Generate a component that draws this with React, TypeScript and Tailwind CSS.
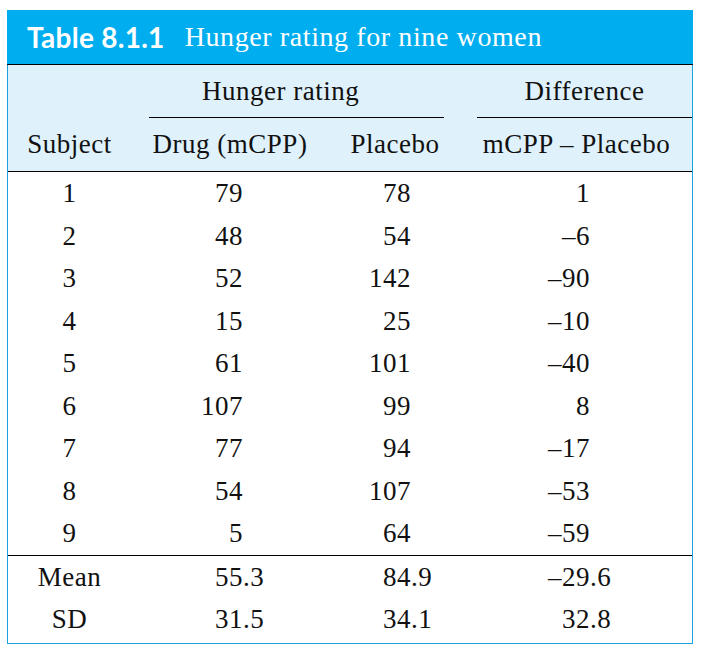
const rows: [string, string, string, string][] = [
  ["1", "79", "78", "1"],
  ["2", "48", "54", "–6"],
  ["3", "52", "142", "–90"],
  ["4", "15", "25", "–10"],
  ["5", "61", "101", "–40"],
  ["6", "107", "99", "8"],
  ["7", "77", "94", "–17"],
  ["8", "54", "107", "–53"],
  ["9", "5", "64", "–59"],
];

const stats: [string, string, string, string][] = [
  ["Mean", "55.3", "84.9", "–29.6"],
  ["SD", "31.5", "34.1", "32.8"],
];

// integer part right-aligned at a fixed edge, decimals hang past it
function Num({ value, edge }: { value: string; edge: string }) {
  const [int, frac] = value.split(".");
  return (
    <div className="flex">
      <span className={`${edge} text-right shrink-0`}>{int}</span>
      {frac !== undefined && <span>.{frac}</span>}
    </div>
  );
}

function Row({ cells }: { cells: [string, string, string, string] }) {
  return (
    <div className="grid grid-cols-[123px_198px_130px_1fr] h-[42.5px] items-center">
      <div className="text-center">{cells[0]}</div>
      <Num value={cells[1]} edge="w-[112px]" />
      <Num value={cells[2]} edge="w-[82px]" />
      <Num value={cells[3]} edge="w-[131px]" />
    </div>
  );
}

export default function App() {
  return (
    <div className="min-h-[652px] bg-white pt-[10px] pl-[7px]">
      <div className="w-[686px] h-[634px] flex flex-col">
        <div className="h-[55px] bg-[#00aeef] border-b border-black flex items-center pl-[20px] gap-[20px] text-white">
          <span className="font-bold text-[28px] tracking-[0.01em]" style={{ fontFamily: "Lato, 'Open Sans', sans-serif" }}>
            Table 8.1.1
          </span>
          <span className="text-[28px] tracking-[0.6px]" style={{ fontFamily: "'Liberation Serif', serif" }}>
            Hunger rating for nine women
          </span>
        </div>

        <div
          className="flex-1 flex flex-col border-x-[1.5px] border-b-[1.5px] border-[#1aa3e0] text-[27px] tracking-[0.5px] text-[#111]"
          style={{ fontFamily: "'Liberation Serif', serif" }}
        >
          <div className="bg-[#dff1fb] border-b border-black">
            <div className="grid grid-cols-[123px_328px_1fr] h-[53px]">
              <div />
              <div className="ml-[18px] mr-[15px] border-b-[1.5px] border-black flex items-center pl-[53px] pt-[1px]">
                Hunger rating
              </div>
              <div className="ml-[18px] border-b-[1.5px] border-black flex items-center justify-center pt-[1px]">
                Difference
              </div>
            </div>
            <div className="grid grid-cols-[123px_198px_130px_1fr] h-[53px] items-center">
              <div className="text-center">Subject</div>
              <div className="text-center">Drug (mCPP)</div>
              <div className="text-center pl-[2px]">Placebo</div>
              <div className="text-center pl-[2px]">mCPP – Placebo</div>
            </div>
          </div>

          <div className="border-b border-black">
            {rows.map((r) => (
              <Row key={r[0]} cells={r} />
            ))}
          </div>

          <div>
            {stats.map((r) => (
              <Row key={r[0]} cells={r} />
            ))}
          </div>
        </div>
      </div>
    </div>
  );
}
